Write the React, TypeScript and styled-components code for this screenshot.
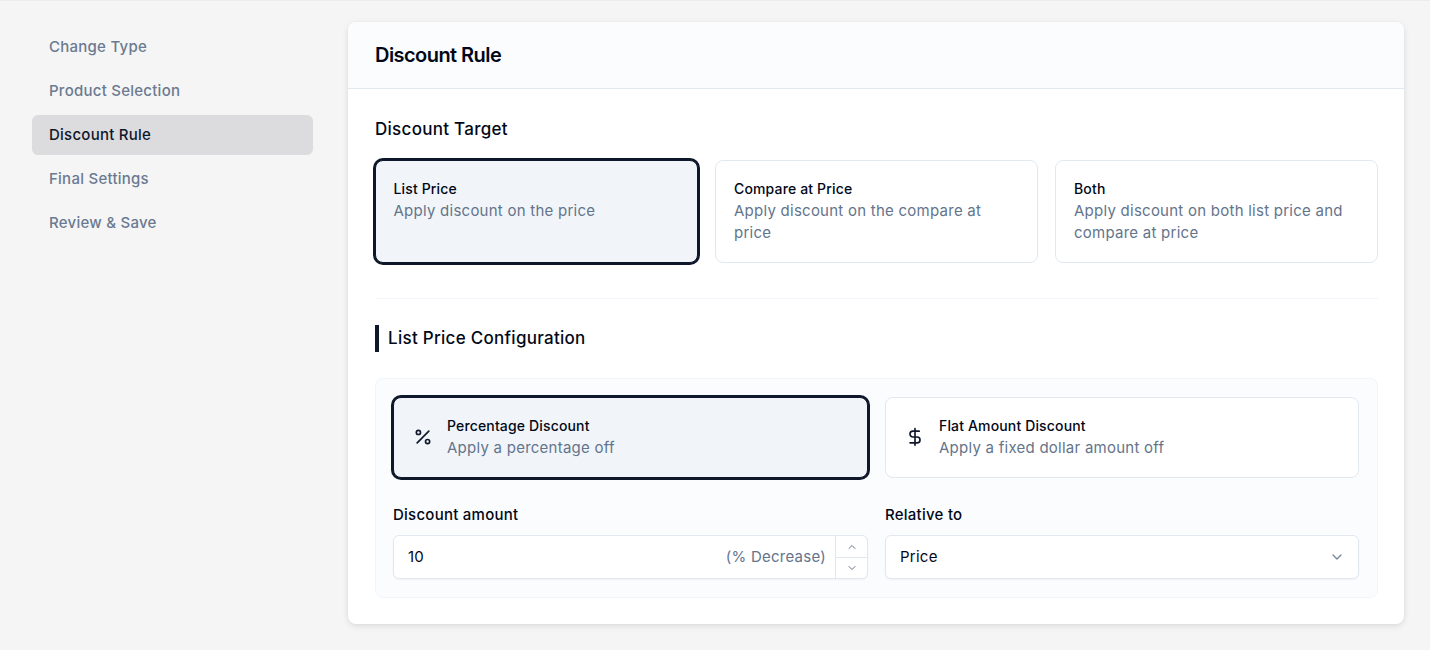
import styled, { createGlobalStyle } from 'styled-components';
import { ChevronDown, ChevronUp, DollarSign, Percent } from 'lucide-react';

const GlobalStyle = createGlobalStyle`
  html, body {
    margin: 0;
    padding: 0;
    background: #f5f5f6;
    font-family: Inter, "Liberation Sans", sans-serif;
    color: #020817;
  }
  * { box-sizing: border-box; }
`

const Page = styled.div`
  width: 1430px;
  height: 650px;
  overflow: hidden;
  border-top: 1px solid #ececee;
  padding: 21px 26px 0 32px;
  display: grid;
  grid-template-columns: 281px 1056px;
  column-gap: 35px;
  align-items: start;
`

const Sidebar = styled.nav`
  display: flex;
  flex-direction: column;
  gap: 4px;
  padding-top: 5px;
`

const NavItem = styled.div<{ $active?: boolean }>`
  height: 40px;
  display: flex;
  align-items: center;
  padding: 0 17px 1px;
  border-radius: 6px;
  font-size: 15px;
  letter-spacing: .25px;
  font-weight: 500;
  color: ${props => props.$active ? '#0f172a' : '#6b7a90'};
  background: ${props => props.$active ? '#dcdcdf' : 'transparent'};
`

const Card = styled.main`
  height: 602px;
  background: #fff;
  border-radius: 8px;
  box-shadow: 0 2px 6px rgba(0, 0, 0, .11), 0 0 2px rgba(0, 0, 0, .03);
  overflow: hidden;
`

const CardHeader = styled.header`
  height: 67px;
  padding-left: 27px;
  display: flex;
  align-items: center;
  background: #fafcfe;
  border-bottom: 1px solid #e2e8f0;
`

const CardTitle = styled.h1`
  margin: 0;
  font-size: 20px;
  line-height: 28px;
  font-weight: 600;
  letter-spacing: -0.55px;
`

const CardBody = styled.div`
  padding: 28px 26px 0 27px;
`

const SectionTitle = styled.h2`
  margin: 0;
  font-size: 17px;
  letter-spacing: .28px;
  line-height: 24px;
  font-weight: 500;
`

const TargetGrid = styled.div`
  display: grid;
  grid-template-columns: repeat(3, 1fr);
  gap: 17px;
  margin-top: 19px;
`

const Option = styled.div<{ $selected?: boolean }>`
  display: flex;
  border-radius: 8px;
  border: 1px solid ${props => props.$selected ? '#0f172a' : '#e2e8f0'};
  background: ${props => props.$selected ? '#f1f5f9' : '#fff'};
  box-shadow: ${props => props.$selected ? '0 0 0 2px #0f172a' : 'none'};
`

const TargetOption = styled(Option)`
  height: 103px;
  padding: 17px 18px;
  padding-left: ${props => props.$selected ? '17.5px' : '18px'};
  align-items: flex-start;
`

const OptionTitle = styled.div`
  font-size: 14px;
  letter-spacing: .15px;
  line-height: 22px;
  font-weight: 500;
  color: #020817;
`

const OptionText = styled.div`
  font-size: 15px;
  letter-spacing: .25px;
  line-height: 22px;
  color: #64748b;
`

const Divider = styled.hr`
  margin: 35px 0 26px;
  border: 0;
  border-top: 1px solid #f1f5f9;
`

const ConfigHeading = styled(SectionTitle)`
  height: 27px;
  line-height: 26px;
  padding-left: 9px;
  border-left: 4px solid #0f172a;
`

const Panel = styled.section`
  margin-top: 26px;
  height: 220px;
  padding: 18px 17px;
  border: 1px solid #f1f5f9;
  border-radius: 8px;
  background: #fafcfe;
`

const TwoCols = styled.div`
  display: grid;
  grid-template-columns: 475px 474px;
  column-gap: 17px;
`

const TypeOption = styled(Option)`
  height: 81px;
  padding: 0 18px 2px 19px;
  align-items: center;
  gap: 14px;
  color: #0f172a;
  svg { flex: none; }
`

const FieldRow = styled(TwoCols)`
  margin-top: 27px;
`

const Label = styled.label`
  display: block;
  font-size: 15px;
  letter-spacing: .25px;
  line-height: 20px;
  font-weight: 500;
  margin-bottom: 10px;
`

const InputBox = styled.div`
  height: 44px;
  display: flex;
  align-items: center;
  background: #fff;
  border: 1px solid #e2e8f0;
  border-radius: 6px;
  box-shadow: 0 1px 2px rgba(0, 0, 0, .05);
  font-size: 15px;
  letter-spacing: .25px;
  padding-left: 14px;
`

const InputValue = styled.span`
  flex: 1;
  padding-bottom: 1px;
`

const Suffix = styled.span`
  color: #64748b;
  margin-right: 9px;
  padding-bottom: 1px;
`

const Stepper = styled.div`
  width: 32px;
  height: 100%;
  display: grid;
  grid-template-rows: 1fr 1fr;
  border-left: 1px solid #e2e8f0;
`

const StepButton = styled.div`
  display: flex;
  align-items: center;
  justify-content: center;
  color: #64748b;
  & + & { border-top: 1px solid #e2e8f0; }
`

const SelectValue = styled.span`
  padding-bottom: 1px;
`

const SelectBox = styled(InputBox)`
  justify-content: space-between;
  padding-right: 13px;
  svg { color: #64748b; opacity: .85; }
`

const targets = [
  { title: 'List Price', text: 'Apply discount on the price', selected: true },
  { title: 'Compare at Price', text: 'Apply discount on the compare at price' },
  { title: 'Both', text: 'Apply discount on both list price and compare at price' },
]

const steps = ['Change Type', 'Product Selection', 'Discount Rule', 'Final Settings', 'Review & Save']

export default function App() {
  return (
    <Page>
      <GlobalStyle />
      <Sidebar>
        {steps.map(step => (
          <NavItem key={step} $active={step === 'Discount Rule'}>{step}</NavItem>
        ))}
      </Sidebar>
      <Card>
        <CardHeader>
          <CardTitle>Discount Rule</CardTitle>
        </CardHeader>
        <CardBody>
          <SectionTitle>Discount Target</SectionTitle>
          <TargetGrid>
            {targets.map(t => (
              <TargetOption key={t.title} $selected={t.selected}>
                <div>
                  <OptionTitle>{t.title}</OptionTitle>
                  <OptionText>{t.text}</OptionText>
                </div>
              </TargetOption>
            ))}
          </TargetGrid>
          <Divider />
          <ConfigHeading>List Price Configuration</ConfigHeading>
          <Panel>
            <TwoCols>
              <TypeOption $selected>
                <Percent size={20} strokeWidth={2} />
                <div>
                  <OptionTitle>Percentage Discount</OptionTitle>
                  <OptionText>Apply a percentage off</OptionText>
                </div>
              </TypeOption>
              <TypeOption>
                <DollarSign size={20} strokeWidth={2} />
                <div>
                  <OptionTitle>Flat Amount Discount</OptionTitle>
                  <OptionText>Apply a fixed dollar amount off</OptionText>
                </div>
              </TypeOption>
            </TwoCols>
            <FieldRow>
              <div>
                <Label>Discount amount</Label>
                <InputBox>
                  <InputValue>10</InputValue>
                  <Suffix>(% Decrease)</Suffix>
                  <Stepper>
                    <StepButton><ChevronUp size={12} /></StepButton>
                    <StepButton><ChevronDown size={12} /></StepButton>
                  </Stepper>
                </InputBox>
              </div>
              <div>
                <Label>Relative to</Label>
                <SelectBox>
                  <SelectValue>Price</SelectValue>
                  <ChevronDown size={16} />
                </SelectBox>
              </div>
            </FieldRow>
          </Panel>
        </CardBody>
      </Card>
    </Page>
  );
}
